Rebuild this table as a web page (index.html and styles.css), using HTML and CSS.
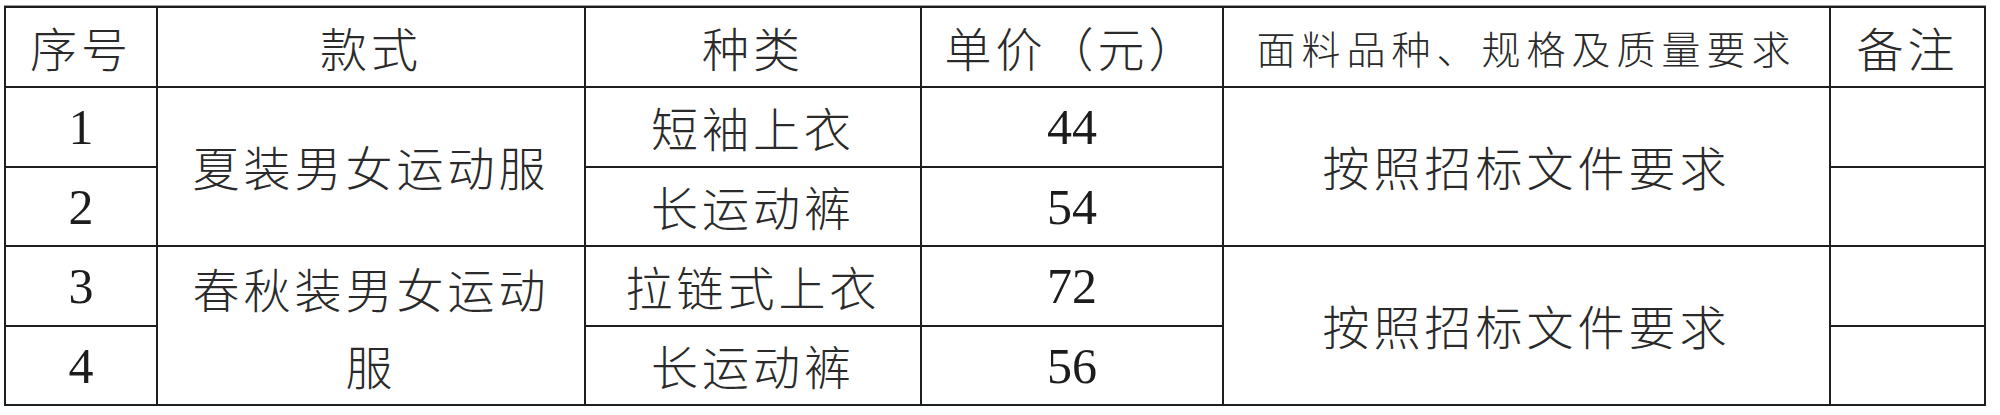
FILE: index.html
```html
<!DOCTYPE html>
<html lang="zh-CN">
<head>
<meta charset="utf-8">
<title>运动服采购表</title>
<link rel="stylesheet" href="styles.css">
</head>
<body>
<table class="sheet">
  <colgroup>
    <col class="c-no">
    <col class="c-style">
    <col class="c-kind">
    <col class="c-price">
    <col class="c-spec">
    <col class="c-note">
  </colgroup>
  <thead>
    <tr class="r-head">
      <th>序号</th>
      <th>款式</th>
      <th>种类</th>
      <th>单价（元）</th>
      <th class="spec-head">面料品种、规格及质量要求</th>
      <th>备注</th>
    </tr>
  </thead>
  <tbody>
    <tr class="r1">
      <td class="num">1</td>
      <td rowspan="2">夏装男女运动服</td>
      <td>短袖上衣</td>
      <td class="num">44</td>
      <td rowspan="2">按照招标文件要求</td>
      <td></td>
    </tr>
    <tr class="r2">
      <td class="num">2</td>
      <td>长运动裤</td>
      <td class="num">54</td>
      <td></td>
    </tr>
    <tr class="r3">
      <td class="num">3</td>
      <td rowspan="2" class="wrap">春秋装男女运动服</td>
      <td>拉链式上衣</td>
      <td class="num">72</td>
      <td rowspan="2">按照招标文件要求</td>
      <td></td>
    </tr>
    <tr class="r4">
      <td class="num">4</td>
      <td>长运动裤</td>
      <td class="num">56</td>
      <td></td>
    </tr>
  </tbody>
</table>
</body>
</html>
```

FILE: styles.css
```css
html, body {
  margin: 0;
  padding: 0;
  background: #ffffff;
}

body {
  padding: 6px 0 0 4px;
}

.sheet {
  border-collapse: collapse;
  table-layout: fixed;
  width: 1982px;
  font-family: "Noto Sans CJK SC", "Noto Sans CJK JP", sans-serif;
  font-weight: 300;
  color: #2a2a2a;
  box-shadow: 0 -1px 0 #9a9a9a;
}

.c-no { width: 152px; }
.c-style { width: 428px; }
.c-kind { width: 336px; }
.c-price { width: 302px; }
.c-spec { width: 607px; }
.c-note { width: 155px; }

.sheet th,
.sheet td {
  border: 2px solid #1e1e1e;
  padding: 0 4px;
  text-align: center;
  vertical-align: middle;
  font-size: 47px;
  font-weight: 300;
  letter-spacing: 4px;
  line-height: 1.2;
  white-space: nowrap;
}

.r-head { height: 80px; }
.r1 { height: 80px; }
.r2 { height: 79px; }
.r3 { height: 80px; }
.r4 { height: 79px; }

.sheet .spec-head {
  font-size: 39px;
  letter-spacing: 6px;
}

.sheet .num {
  font-family: "Liberation Serif", "Times New Roman", serif;
  font-size: 50px;
  font-weight: 400;
  letter-spacing: 0;
  color: #1c1c1c;
}

.sheet .wrap {
  white-space: normal;
  padding: 0 22px;
  line-height: 77px;
}
```
